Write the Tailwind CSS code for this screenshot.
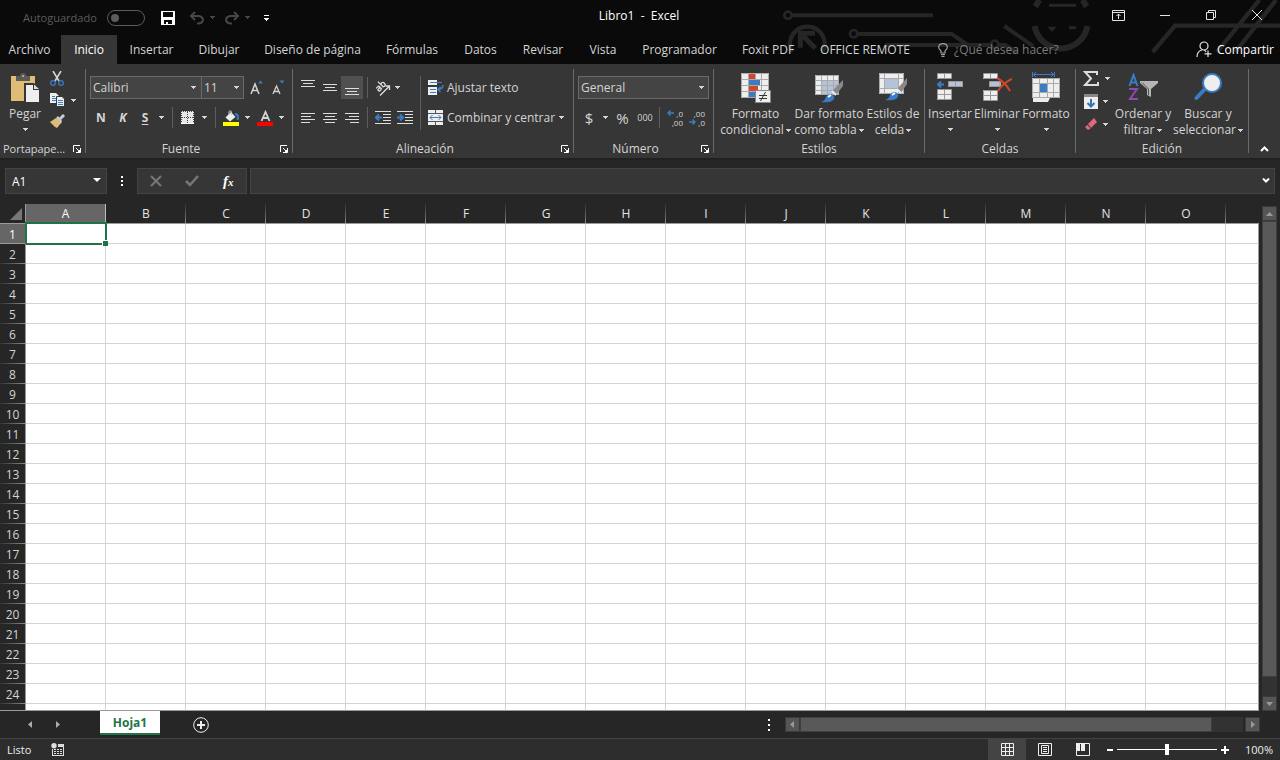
<!DOCTYPE html>
<html lang="es">
<head>
<meta charset="utf-8">
<title>Libro1 - Excel</title>
<script src="https://cdn.jsdelivr.net/npm/@tailwindcss/browser@4"></script>
</head>
<body class="flex h-screen flex-col overflow-hidden bg-[#262626] font-['Open_Sans','Noto_Sans',sans-serif] text-[12px] leading-4 text-[#d4d4d4] select-none">
<svg width="0" height="0" class="absolute" aria-hidden="true">
  <symbol id="caret" viewBox="0 0 5 3"><path d="M0 0h5v1H4v1H3v1H2V2H1V1H0z" fill="currentColor"/></symbol>
  <symbol id="launch" viewBox="0 0 8 8"><path d="M.5 7V.5H7M3 3L7 7" stroke="currentColor" fill="none"/><path d="M7.500 3v4.500H3M6.500 5v1.500H5" stroke="currentColor" fill="none"/></symbol>
</svg>

<!-- Title bar and ribbon tabs -->
<header class="relative shrink-0 bg-[#0a0a0a]">
  <svg class="absolute top-0 right-0 h-[64px] w-[520px]" viewBox="0 0 1560 192" fill="none" stroke="#262626" stroke-width="12" aria-hidden="true">
    <circle cx="84" cy="46" r="11" stroke-width="8"/><path d="M95 46H519"/>
    <circle cx="281" cy="101" r="11" stroke-width="8"/><path d="M292 102H575L625 136"/>
    <path d="M96 156A52 52 0 1 1 188 156" stroke-width="13"/><path d="M121 143V100H165M124 103L166 145" stroke-width="15"/>
    <path d="M375 135H690M733 78L820 139M717 135H735L770 156"/><circle cx="704" cy="133" r="11" stroke-width="8"/>
    <path d="M826 20L838 0M980 20L968 0" stroke-width="18"/><path d="M867 16H948" stroke-width="9"/>
    <path d="M824 78A80 80 0 0 0 982 78" stroke-width="18"/><path d="M862 80H890L876 95z" fill="#262626" stroke="none"/><path d="M927 83H948" stroke-width="9"/>
    <path d="M1178 156L1245 77H1560M1371 156L1498 0M1426 156L1548 0" stroke-width="13"/>
  </svg>
  <div class="relative flex h-[35px] items-center">
    <div class="flex flex-1 items-center">
      <label class="flex w-[146px] items-center gap-[8px] pl-[23px] text-[#5c5c5c]">
        <span class="w-[76px] text-[11px] whitespace-nowrap">Autoguardado</span>
        <span class="relative h-[16px] w-[38px] shrink-0"><input type="checkbox" class="block h-[16px] w-[38px] appearance-none rounded-full border border-[#5c5c5c]"><i class="absolute top-[4px] left-[4px] size-[8px] rounded-full bg-[#5c5c5c]"></i></span>
      </label>
      <button aria-label="Guardar" class="ml-[15px] size-[14px]"><svg viewBox="0 0 14 14" class="size-[14px]"><path d="M0 0H14V14H0zM2 1V6H12V1zM3 9V13H5V11H7V13H11V9z" fill="#fff" fill-rule="evenodd"/></svg></button>
      <button aria-label="Deshacer" class="ml-[14px] flex items-center gap-[5px] text-[#474747]"><svg viewBox="0 0 16 14" class="h-[14px] w-[16px]" fill="none" stroke="currentColor" stroke-width="2"><path d="M6 1L2 5L6 9M2 5H10Q14 6 14 9Q13 13 8 12.500"/></svg><svg class="h-[3px] w-[5px]"><use href="#caret"/></svg></button>
      <button aria-label="Rehacer" class="ml-[9px] flex items-center gap-[5px] text-[#474747]"><svg viewBox="0 0 16 14" class="h-[14px] w-[16px]" fill="none" stroke="currentColor" stroke-width="2"><path d="M10 1L14 5L10 9M14 5H6Q2 6 2 9Q3 13 8 12.500"/></svg><svg class="h-[3px] w-[5px]"><use href="#caret"/></svg></button>
      <button aria-label="Personalizar barra" class="ml-[14px] flex flex-col gap-[2px] text-white"><i class="h-px w-[5px] bg-white"></i><svg class="h-[3px] w-[5px]"><use href="#caret"/></svg></button>
    </div>
    <h1 class="pb-[3px] pl-[16px] whitespace-pre text-white">Libro1  -  Excel</h1>
    <div class="flex flex-1 justify-end pr-[18px] pb-[5px]">
      <button aria-label="Opciones de la cinta" class="mr-[35px]"><svg viewBox="0 0 13 11" class="h-[11px] w-[13px]" fill="none" stroke="#e4e4e4"><path d="M.5.5h12v10H.5zM1 2.500h12M6.500 9V4M4.500 6L6.500 4L8.500 6"/></svg></button>
      <button aria-label="Minimizar" class="mr-[36px]"><svg viewBox="0 0 10 10" class="size-[10px]"><path d="M0 5.500H10" stroke="#e4e4e4"/></svg></button>
      <button aria-label="Restaurar" class="mr-[36px]"><svg viewBox="0 0 10 10" class="size-[10px]" fill="none" stroke="#e4e4e4"><path d="M.5 2.500h7v7h-7zM2.500 2V.5h7v7H8"/></svg></button>
      <button aria-label="Cerrar"><svg viewBox="0 0 10 10" class="size-[10px]"><path d="M0 0L10 10M10 0L0 10" stroke="#e4e4e4"/></svg></button>
    </div>
  </div>
  <nav class="relative flex h-[29px] items-center whitespace-nowrap">
    <button class="w-[61px] pr-[2px]">Archivo</button>
    <button class="h-full w-[56px] bg-[#363636] text-white">Inicio</button>
    <button class="w-[69px]">Insertar</button>
    <button class="w-[66px]">Dibujar</button>
    <button class="w-[121px]">Diseño de página</button>
    <button class="w-[78px]">Fórmulas</button>
    <button class="w-[59px]">Datos</button>
    <button class="w-[66px]">Revisar</button>
    <button class="w-[54px]">Vista</button>
    <button class="w-[99px]">Programador</button>
    <button class="w-[78px]">Foxit PDF</button>
    <button class="w-[116px]">OFFICE REMOTE</button>
    <button class="ml-[15px] flex items-center gap-[6px] text-[#7b7b7b]"><svg viewBox="0 0 10 14" class="h-[14px] w-[10px]" fill="none" stroke="#a0a0a0"><path d="M3 10V8Q.5 6 .7 4Q1 .7 5 .7T9.300 4Q9.500 6 7 8V10zM3 11.500H7M3.500 13.300H6.500" stroke-width="1.200"/></svg>¿Qué desea hacer?</button>
    <button class="mr-[6px] ml-auto flex items-center gap-[5px] text-white"><svg viewBox="0 0 16 17" class="h-[17px] w-[16px]" fill="none" stroke="#e4e4e4" stroke-width="1.200"><circle cx="8" cy="5" r="4"/><path d="M1 16Q1 10 6 9M8 9Q9.500 9.500 10 11M12 9.500V16M8.500 12.800H15.500"/></svg>Compartir</button>
  </nav>
</header>

<!-- Ribbon -->
<main class="flex min-h-0 flex-1 flex-col">
<div class="flex h-[94px] shrink-0 bg-[#363636] whitespace-nowrap">

  <section class="flex w-[85px] shrink-0 flex-col">
    <div class="flex h-[77px]">
      <button class="flex w-[50px] flex-col items-center pt-[9px]">
        <svg viewBox="0 0 29 30" class="h-[30px] w-[29px]"><path d="M0 3H24V28H0z" fill="#e0bd76"/><path d="M5 8V3H9Q9 0 12 0T15 3H19V8z" fill="#5a5a5a"/><circle cx="12" cy="3" r="1" fill="#e0bd76"/><path d="M13 10H23L29 15V30H13z" fill="#363636"/><path d="M15 12H22V17H28V29H15z" fill="#eee"/><path d="M23 11.500L28 16H23z" fill="#ddd"/></svg>
        <span class="mt-[3px]">Pegar</span><svg class="mt-[6px] h-[3px] w-[5px]"><use href="#caret"/></svg>
      </button>
      <div class="flex flex-col gap-[7px] pt-[7px]">
        <button aria-label="Cortar" class="w-[14px]"><svg viewBox="0 0 14 15" class="h-[15px] w-[14px]" fill="none" stroke="#d4d4d4" stroke-width="1.600"><path d="M3 0L9 10M11 0L5 10"/><g stroke="#3a7dc4" stroke-width="1.300"><circle cx="3" cy="12" r="2.300"/><circle cx="11" cy="12" r="2.300"/></g></svg></button>
        <button aria-label="Copiar" class="flex items-center gap-[6px]"><svg viewBox="0 0 15 14" class="h-[14px] w-[15px]"><path d="M0 0H6L9 3V10H0z" fill="#eee"/><path d="M2 3.500H5M2 5.500H6M2 7.500H6" stroke="#3a7dc4"/><path d="M6.500 3.500H12L14.500 6V13.500H6.500z" fill="#eee" stroke="#363636"/><path d="M8 7.500H13M8 9.500H13M8 11.500H13" stroke="#3a7dc4"/></svg><svg class="h-[3px] w-[5px]"><use href="#caret"/></svg></button>
        <button aria-label="Copiar formato" class="w-[16px]"><svg viewBox="0 0 16 14" class="h-[14px] w-[16px]"><path d="M0 8L6 4L11 9L7 14L5 13L3 11z" fill="#e0bd76"/><path d="M6 4L8 2L12 7L11 10z" fill="#ccc"/><path d="M10 5L14 1" stroke="#ccc" stroke-width="3"/></svg></button>
      </div>
    </div>
    <footer class="flex items-center justify-between pr-[4px] pl-[3px]"><span class="text-[11px]">Portapape...</span><button aria-label="Portapapeles"><svg class="block size-[8px] text-white"><use href="#launch"/></svg></button></footer>
  </section>
  <i class="h-[84px] w-px shrink-0 self-center bg-[#6a6a6a]"></i>

  <section class="flex w-[206px] shrink-0 flex-col">
    <div class="flex h-[77px] flex-col gap-[7px] pt-[12px] pl-[4px]">
      <div class="flex h-[23px] items-center">
        <div class="relative h-full"><select aria-label="Fuente" class="h-full w-[112px] appearance-none border border-[#6a6a6a] bg-[#444] pl-[2px]"><option>Calibri</option></select><svg class="pointer-events-none absolute top-[10px] right-[6px] h-[3px] w-[5px]"><use href="#caret"/></svg></div>
        <div class="relative -ml-px h-full"><select aria-label="Tamaño de fuente" class="h-full w-[43px] appearance-none border border-[#6a6a6a] bg-[#444] pl-[2px]"><option>11</option></select><svg class="pointer-events-none absolute top-[10px] right-[5px] h-[3px] w-[5px]"><use href="#caret"/></svg></div>
        <button aria-label="Aumentar tamaño" class="ml-[6px]"><svg viewBox="0 0 14 15" class="h-[15px] w-[14px]"><path d="M1 14L5 4L9 14M2.500 10.500H8" fill="none" stroke="#d4d4d4" stroke-width="1.500"/><path d="M8 3.500L10.500.5L13 3.500z" fill="#3a7dc4"/></svg></button>
        <button aria-label="Reducir tamaño" class="ml-[8px]"><svg viewBox="0 0 14 15" class="h-[15px] w-[14px]"><path d="M1 14L4.500 6L8 14M2.500 11.500H7" fill="none" stroke="#d4d4d4" stroke-width="1.300"/><path d="M7.500.5L10 3.500L12.500.5z" fill="#3a7dc4"/></svg></button>
      </div>
      <div class="flex h-[23px] items-center">
        <button class="w-[22px] font-bold">N</button><button class="w-[22px] font-bold italic">K</button><button class="w-[22px] font-bold underline underline-offset-2">S</button>
        <button aria-label="Subrayado" class="w-[11px] pl-[3px]"><svg class="h-[3px] w-[5px]"><use href="#caret"/></svg></button>
        <i class="ml-[5px] h-[21px] w-px bg-[#5e5e5e]"></i>
        <button aria-label="Bordes" class="ml-[8px] flex items-center gap-[8px]"><svg viewBox="0 0 13 13" class="size-[13px]"><path d="M0 0H13V12H0z" fill="#e8e8e8"/><path d="M0 12.500H13" stroke="#fff"/><path d="M.5 0V12M6.500 1V12M12.500 0V12M0 .5H13M1 6.500H13" stroke="#444" stroke-dasharray="1 1"/></svg><svg class="h-[3px] w-[5px]"><use href="#caret"/></svg></button>
        <i class="ml-[8px] h-[21px] w-px bg-[#5e5e5e]"></i>
        <button aria-label="Color de relleno" class="ml-[7px] flex items-center gap-[6px]"><svg viewBox="0 0 16 16" class="size-[16px]"><path d="M0 12H16V16H0z" fill="#ff0"/><path d="M2.500 7.500L8 2L12.500 7L7 11.500z" fill="#eee"/><path d="M6 5V1.500Q7 0 8.500 1.500V5" fill="none" stroke="#ccc"/><path d="M12 4Q16 4 14.500 10" fill="none" stroke="#3a7dc4" stroke-width="2"/></svg><svg class="h-[3px] w-[5px]"><use href="#caret"/></svg></button>
        <button aria-label="Color de fuente" class="ml-[7px] flex items-center gap-[6px]"><svg viewBox="0 0 16 16" class="size-[16px]"><path d="M4.500 11L8.500 2L12.500 11M5.500 8H11.500" fill="none" stroke="#d4d4d4" stroke-width="1.800"/><path d="M0 12H16V16H0z" fill="#f00"/></svg><svg class="h-[3px] w-[5px]"><use href="#caret"/></svg></button>
      </div>
    </div>
    <footer class="flex items-center pr-[4px]"><span class="flex-1 pr-[4px] text-center">Fuente</span><button aria-label="Más de fuente"><svg class="block size-[8px] text-white"><use href="#launch"/></svg></button></footer>
  </section>
  <i class="h-[84px] w-px shrink-0 self-center bg-[#6a6a6a]"></i>

  <section class="flex w-[280px] shrink-0 flex-col">
    <div class="flex h-[77px] pt-[12px] pl-[4px]">
      <div class="flex flex-col gap-[7px]">
        <div class="flex h-[23px] items-center">
          <button aria-label="Alinear arriba" class="flex h-full w-[22px] items-center justify-center pb-[8px]"><svg viewBox="0 0 14 7" class="h-[7px] w-[14px]"><path d="M0 .5H14M2 3.500H12M0 6.500H14" stroke="#ddd"/></svg></button>
          <button aria-label="Alinear en medio" class="flex h-full w-[22px] items-center justify-center"><svg viewBox="0 0 14 7" class="h-[7px] w-[14px]"><path d="M0 .5H14M2 3.500H12M0 6.500H14" stroke="#ddd"/></svg></button>
          <button aria-label="Alinear abajo" class="flex h-full w-[22px] items-center justify-center bg-[#505050] pt-[8px]"><svg viewBox="0 0 14 7" class="h-[7px] w-[14px]"><path d="M0 .5H14M2 3.500H12M0 6.500H14" stroke="#ddd"/></svg></button>
          <i class="ml-[4px] h-[21px] w-px bg-[#5e5e5e]"></i>
          <button aria-label="Orientación" class="ml-[7px] flex items-center gap-[3px]"><svg viewBox="0 0 17 16" class="h-[16px] w-[17px] overflow-visible" fill="none" stroke="#ddd" stroke-width="1.300"><g transform="rotate(-45 5 8)"><path d="M2 5.500H4.500Q5.500 5.500 5.500 7V10M5.500 7.500H3.500Q2 7.500 2 8.700T3.500 10T5.500 9M8 2V10M8 6.500Q9 5.300 10 5.500Q11.500 5.700 11.500 7.700T10 10Q9 10.200 8 9"/></g><path d="M5 15.500L14 6.500M10.500 6H14.500V10"/></svg><svg class="h-[3px] w-[5px]"><use href="#caret"/></svg></button>
        </div>
        <div class="flex h-[23px] items-center">
          <button aria-label="Alinear a la izquierda" class="flex w-[22px] justify-center"><svg viewBox="0 0 14 10" class="h-[10px] w-[14px]"><path d="M0 .5H14M0 3.500H10M0 6.500H14M0 9.500H9" stroke="#ddd"/></svg></button>
          <button aria-label="Centrar" class="flex w-[22px] justify-center"><svg viewBox="0 0 14 10" class="h-[10px] w-[14px]"><path d="M0 .5H14M2 3.500H12M0 6.500H14M2 9.500H12" stroke="#ddd"/></svg></button>
          <button aria-label="Alinear a la derecha" class="flex w-[22px] justify-center"><svg viewBox="0 0 14 10" class="h-[10px] w-[14px]"><path d="M0 .5H14M4 3.500H14M0 6.500H14M5 9.500H14" stroke="#ddd"/></svg></button>
          <i class="ml-[4px] h-[21px] w-px bg-[#5e5e5e]"></i>
          <button aria-label="Disminuir sangría" class="ml-[7px]"><svg viewBox="0 0 16 13" class="h-[13px] w-[16px]"><path d="M0 .5H16M8 3.500H16M8 6.500H16M8 9.500H16M0 12.500H16" stroke="#ddd"/><path d="M7 6.500H1M4 3.500L1 6.500L4 9.500" stroke="#3a7dc4" stroke-width="2" fill="none"/></svg></button>
          <button aria-label="Aumentar sangría" class="ml-[6px]"><svg viewBox="0 0 16 13" class="h-[13px] w-[16px]"><path d="M0 .5H16M8 3.500H16M8 6.500H16M8 9.500H16M0 12.500H16" stroke="#ddd"/><path d="M0 6.500H6M3 3.500L6 6.500L3 9.500" stroke="#3a7dc4" stroke-width="2" fill="none"/></svg></button>
        </div>
      </div>
      <i class="ml-[7px] h-[54px] w-px bg-[#5e5e5e]"></i>
      <div class="ml-[7px] flex flex-col gap-[7px]">
        <button class="flex h-[23px] items-center gap-[3px]"><svg viewBox="0 0 16 15" class="h-[15px] w-[16px]"><path d="M0 0H9V5H0zM0 7H9V15H0z" fill="#eee"/><path d="M2 2.500H14M2 9.500H8M2 12.500H8" stroke="#3a7dc4"/><path d="M15 5Q15 9 10 9.500M12.500 7L10 9.500L12.500 12" stroke="#3a7dc4" stroke-width="1.500" fill="none"/></svg>Ajustar texto</button>
        <button class="flex h-[23px] items-center gap-[4px]"><svg viewBox="0 0 15 15" class="size-[15px]"><path d="M0 0H15V15H0z" fill="#eee"/><path d="M0 3.500H15M0 11.500H15M7.500 0V3M7.500 12V15" stroke="#555"/><path d="M2 7.500H13M4.500 5L2 7.500L4.500 10M10.500 5L13 7.500L10.500 10" stroke="#3a7dc4" fill="none"/></svg><span class="w-[108px] text-left">Combinar y centrar</span><svg class="h-[3px] w-[5px]"><use href="#caret"/></svg></button>
      </div>
    </div>
    <footer class="flex items-center pr-[4px]"><span class="flex-1 pr-[4px] text-center">Alineación</span><button aria-label="Más de alineación"><svg class="block size-[8px] text-white"><use href="#launch"/></svg></button></footer>
  </section>
  <i class="h-[84px] w-px shrink-0 self-center bg-[#6a6a6a]"></i>

  <section class="flex w-[139px] shrink-0 flex-col">
    <div class="flex h-[77px] flex-col gap-[7px] pt-[12px] pl-[4px]">
      <div class="relative h-[23px] w-[131px]"><select aria-label="Formato de número" class="h-full w-full appearance-none border border-[#6a6a6a] bg-[#444] pl-[2px]"><option>General</option></select><svg class="pointer-events-none absolute top-[10px] right-[5px] h-[3px] w-[5px]"><use href="#caret"/></svg></div>
      <div class="flex h-[23px] items-center">
        <button class="w-[22px] text-[15px]">$</button><button aria-label="Monedas" class="flex w-[11px] justify-center"><svg class="h-[3px] w-[5px]"><use href="#caret"/></svg></button><button class="w-[23px] text-[15px]">%</button><button class="w-[22px] text-[9px]">000</button>
        <i class="ml-[3px] h-[21px] w-px bg-[#5e5e5e]"></i>
        <button aria-label="Aumentar decimales" class="ml-[7px] flex w-[16px] flex-col text-[8px] leading-[9px]"><span class="flex items-center justify-between"><svg viewBox="0 0 7 6" class="h-[6px] w-[7px]"><path d="M7 3H1M3.500.5L1 3L3.500 5.500" stroke="#3a7dc4" stroke-width="1.500" fill="none"/></svg>,0</span><span class="text-right">,00</span></button>
        <button aria-label="Disminuir decimales" class="ml-[6px] flex w-[16px] flex-col text-[8px] leading-[9px]"><span class="text-right">,00</span><span class="flex items-center justify-between"><svg viewBox="0 0 7 6" class="h-[6px] w-[7px]"><path d="M0 3H6M3.500.5L6 3L3.500 5.500" stroke="#3a7dc4" stroke-width="1.500" fill="none"/></svg>,0</span></button>
      </div>
    </div>
    <footer class="flex items-center pr-[4px]"><span class="flex-1 pr-[4px] text-center">Número</span><button aria-label="Más de número"><svg class="block size-[8px] text-white"><use href="#launch"/></svg></button></footer>
  </section>
  <i class="h-[84px] w-px shrink-0 self-center bg-[#6a6a6a]"></i>

  <section class="flex w-[210px] shrink-0 flex-col">
    <div class="flex h-[77px] pt-[9px] pl-[4px]">
      <button class="flex w-[75px] flex-col items-center"><svg viewBox="0 0 30 32" class="mb-[1px] h-[32px] w-[30px]"><path d="M0 0H28V25H0z" fill="#eee"/><path d="M8 1H14V6H8z" fill="#d24726"/><path d="M8 7H19V12H8z" fill="#3a7dc4"/><path d="M8 13H17V18H8z" fill="#d24726"/><path d="M8 19H14V24H8z" fill="#3a7dc4"/><path d="M.5.5H27.500V24.500H.5zM0 6.500H28M0 12.500H28M0 18.500H28M7.500 0V25M14.500 0V6M20.500 0V25" fill="none" stroke="#aaa"/><path d="M14.500 17.500H29.500V29.500H14.500z" fill="#eee" stroke="#888"/><path d="M18 22.500H26M18 25.500H26M24.500 19L19.500 28" stroke="#333"/></svg><span>Formato</span><span class="flex items-center gap-[2px]">condicional<svg class="h-[3px] w-[5px]"><use href="#caret"/></svg></span></button>
      <button class="flex w-[72px] flex-col items-center"><svg viewBox="0 0 30 32" class="mb-[1px] h-[32px] w-[30px]"><path d="M1 2H25V22H1z" fill="#eee"/><path d="M7 7H25V22H7z" fill="#b4c3d8"/><path d="M1.500 2.500H24.500V21.500H1.500zM1 7.500H25M1 12.500H25M1 17.500H25M7.500 2V22M13.500 2V22M19.500 2V22" fill="none" stroke="#aaa"/><path d="M29 7V13L22 22L18 18z" fill="#888"/><path d="M18 18L22 22" stroke="#eee" stroke-width="2"/><path d="M7 29Q11 28 12 24Q15 19 19 22Q22 25 18 28Q14 30 7 29z" fill="#3a7dc4"/><path d="M14 24L17 22" stroke="#fff" stroke-width="2"/></svg><span>Dar formato</span><span class="flex items-center gap-[2px]">como tabla<svg class="h-[3px] w-[5px]"><use href="#caret"/></svg></span></button>
      <button class="flex w-[56px] flex-col items-center"><svg viewBox="0 0 30 32" class="mb-[1px] h-[32px] w-[30px]"><path d="M1 0H26V21H1z" fill="#eee"/><path d="M6 5H20V15H6z" fill="#b4c3d8"/><path d="M1.500.5H25.500V20.500H1.500zM1 5.500H25M1 15.500H25M6.500 0V20M20.500 0V20" fill="none" stroke="#aaa"/><path d="M29 5V11L23 20L19 16z" fill="#888"/><path d="M19 16L23 20" stroke="#eee" stroke-width="2"/><path d="M7 27Q11 26 12 22Q15 17 19 20Q22 23 18 26Q14 28 7 27z" fill="#3a7dc4"/><path d="M14 22L17 20" stroke="#fff" stroke-width="2"/></svg><span>Estilos de</span><span class="flex items-center gap-[2px]">celda<svg class="h-[3px] w-[5px]"><use href="#caret"/></svg></span></button>
    </div>
    <footer class="text-center">Estilos</footer>
  </section>
  <i class="h-[84px] w-px shrink-0 self-center bg-[#6a6a6a]"></i>

  <section class="flex w-[150px] shrink-0 flex-col">
    <div class="flex h-[77px] pt-[9px] pl-[1px]">
      <button class="flex w-[48px] flex-col items-center"><svg viewBox="0 0 28 32" class="mb-[1px] h-[32px] w-[28px]"><path d="M1 1H15V6H1zM1 17H15V27H1z" fill="#eee"/><path d="M12 9H27V14H12z" fill="#b4c3d8"/><path d="M1.500.5H15.500V5.500H1.500zM1.500 16.500H15.500V26.500H1.500zM1 21.500H15M8.500 1V6M8.500 17V27M12.500 8.500H26.500V13.500H12.500zM19.500 9V14" fill="none" stroke="#999"/><path d="M8 11.500H2M5 8.500L2 11.500L5 14.500" stroke="#3a7dc4" stroke-width="2" fill="none"/></svg><span>Insertar</span><svg class="mt-[6px] h-[3px] w-[5px]"><use href="#caret"/></svg></button>
      <button class="flex w-[46px] flex-col items-center"><svg viewBox="0 0 30 32" class="mb-[1px] h-[32px] w-[30px]"><path d="M1 1H15V6H1zM1 17H15V27H1z" fill="#eee"/><path d="M7 9H19V14H7z" fill="#b4c3d8"/><path d="M1.500.5H15.500V5.500H1.500zM1.500 17.500H15.500V27.500H1.500zM1 22.500H15M8.500 1V6M8.500 17V27M7.500 8.500H18V13.500H7.500z" fill="none" stroke="#999"/><path d="M15 5Q23 9 28 18M30 6Q21 10 16 18" stroke="#d24726" stroke-width="2" fill="none"/></svg><span>Eliminar</span><svg class="mt-[6px] h-[3px] w-[5px]"><use href="#caret"/></svg></button>
      <button class="flex w-[52px] flex-col items-center"><svg viewBox="0 0 28 32" class="-mt-px mb-[2px] h-[32px] w-[28px]"><path d="M.5 0V5M22.500 0V5M1 2.500H22M4 0L1.500 2.500L4 5M19 0L21.500 2.500L19 5" stroke="#3a7dc4" fill="none"/><path d="M0 6H28V26H18L16 30H1V26H0z" fill="#eee"/><path d="M.5 6.500H27.500V25.500H.5zM0 11.500H28M0 20.500H28M7.500 6V26M15.500 6V26M21.500 6V26" stroke="#aaa" fill="none"/><path d="M8 12H15V20H8z" fill="#3a7dc4"/></svg><span>Formato</span><svg class="mt-[6px] h-[3px] w-[5px]"><use href="#caret"/></svg></button>
    </div>
    <footer class="text-center">Celdas</footer>
  </section>
  <i class="h-[84px] w-px shrink-0 self-center bg-[#6a6a6a]"></i>

  <section class="flex w-[172px] shrink-0 flex-col">
    <div class="flex h-[77px]">
      <div class="flex flex-col gap-[8px] pt-[7px] pl-[7px]">
        <button aria-label="Suma" class="flex items-center gap-[6px]"><svg viewBox="0 0 16 15" class="h-[15px] w-[16px]"><path d="M14 4V1H2L8 7.500L2 14H15V11" fill="none" stroke="#ddd" stroke-width="2"/></svg><svg class="h-[3px] w-[5px]"><use href="#caret"/></svg></button>
        <button aria-label="Rellenar" class="flex items-center gap-[5px] pl-[1px]"><svg viewBox="0 0 14 15" class="h-[15px] w-[14px]"><path d="M0 0H14V15H0z" fill="#eee"/><path d="M0 0H14V3H0z" fill="#888"/><path d="M7 5V13M3.500 9L7 12.500L10.500 9" stroke="#2e75b6" stroke-width="2" fill="none"/></svg><svg class="h-[3px] w-[5px]"><use href="#caret"/></svg></button>
        <button aria-label="Borrar" class="flex items-center gap-[5px] pl-[1px]"><svg viewBox="0 0 14 14" class="size-[14px]"><path d="M4 7L10 1L13 5L7 11z" fill="#e06a7c"/><path d="M3.500 8L6.500 11.500L4 13L1 10z" fill="#e06a7c"/></svg><svg class="h-[3px] w-[5px]"><use href="#caret"/></svg></button>
      </div>
      <button class="ml-[4px] flex w-[58px] flex-col items-center pt-[9px]"><svg viewBox="0 0 30 32" class="mb-[1px] h-[32px] w-[30px]"><path d="M1.500 13L5.500 2L9.500 13M3 9.500H8" stroke="#3a7dc4" stroke-width="2" fill="none"/><path d="M1 16H9L2 26H10" stroke="#8e4bae" stroke-width="2" fill="none"/><path d="M12 8H30V10L23 16V24L19 22V16L12 10z" fill="#b5b5b5"/><path d="M14 9.500L20.500 16V22" stroke="#555" fill="none"/></svg><span>Ordenar y</span><span class="flex items-center gap-[3px]">filtrar<svg class="h-[3px] w-[5px]"><use href="#caret"/></svg></span></button>
      <button class="flex w-[72px] flex-col items-center pt-[9px]"><svg viewBox="0 0 28 32" class="mb-[1px] h-[32px] w-[28px]"><path d="M2.500 25L10 17" stroke="#3a7dc4" stroke-width="4" stroke-linecap="round"/><circle cx="18" cy="10" r="9" fill="#eee" stroke="#3a7dc4" stroke-width="2"/></svg><span>Buscar y</span><span class="flex items-center gap-[2px]">seleccionar<svg class="h-[3px] w-[5px]"><use href="#caret"/></svg></span></button>
    </div>
    <footer class="text-center">Edición</footer>
  </section>
  <i class="h-[84px] w-px shrink-0 self-center bg-[#6a6a6a]"></i>
  <div class="flex flex-1 items-end justify-center pb-[6px]"><button aria-label="Contraer la cinta"><svg viewBox="0 0 9 6" class="h-[6px] w-[9px]"><path d="M1 5L4.500 1.500L8 5" stroke="#fff" stroke-width="2" fill="none"/></svg></button></div>
</div>

<!-- Formula bar -->
<div class="flex h-[46px] shrink-0 items-start border-t-2 border-[#212121] px-[5px] pt-[8px]">
  <div class="relative h-[26px] w-[102px]"><input aria-label="Cuadro de nombres" value="A1" class="h-full w-full border border-[#444] bg-[#363636] px-[6px] text-white"><svg class="pointer-events-none absolute top-[10px] right-[6px] h-[4px] w-[8px]" viewBox="0 0 8 4"><path d="M0 0H8L4 4z" fill="#fff"/></svg></div>
  <div class="flex h-[26px] w-[30px] flex-col items-center justify-center gap-[2px]"><i class="size-[2px] bg-white"></i><i class="size-[2px] bg-white"></i><i class="size-[2px] bg-white"></i></div>
  <div class="flex h-[26px] w-[110px] items-center border border-[#444] bg-[#363636]">
    <button aria-label="Cancelar" class="ml-[12px]"><svg viewBox="0 0 12 12" class="size-[12px]"><path d="M1 1L11 11M11 1L1 11" stroke="#777" stroke-width="2"/></svg></button>
    <button aria-label="Introducir" class="ml-[23px]"><svg viewBox="0 0 14 12" class="h-[12px] w-[14px]"><path d="M1 6L5 10L13 1" stroke="#777" stroke-width="2.500" fill="none"/></svg></button>
    <button class="ml-[24px] font-['Liberation_Serif',serif] text-[15px] font-bold text-white italic">f<span class="text-[11px]">x</span></button>
  </div>
  <div class="relative ml-[3px] h-[26px] flex-1"><input aria-label="Barra de fórmulas" class="h-full w-full border border-[#444] bg-[#363636] px-[6px] text-white"><svg class="pointer-events-none absolute top-[10px] right-[5px] h-[5px] w-[8px]" viewBox="0 0 8 5"><path d="M1 .5L4 3.500L7 .5" stroke="#fff" stroke-width="2" fill="none"/></svg></div>
</div>

<!-- Sheet -->
<div class="flex min-h-0 flex-1">
  <div class="min-w-0 flex-1 overflow-hidden border-b border-[#9a9a9a]">
    <table class="w-full table-fixed border-separate border-spacing-0 bg-white">
      <thead><tr id="cols" class="h-[20px] bg-[#262626] text-[#e4e4e4]"></tr></thead>
      <tbody id="rows"></tbody>
    </table>
  </div>
  <div class="flex w-[21px] flex-col items-center pt-[2px] pr-px">
    <button aria-label="Subir" class="flex h-[15px] w-[15px] items-center justify-center border border-[#3a3a3a] bg-[#555]"><svg viewBox="0 0 7 4" class="h-[4px] w-[7px]"><path d="M0 4H7L3.500 0z" fill="#999"/></svg></button>
    <div class="w-[15px] flex-1 bg-[#323232]"><div class="h-[96%] border border-[#3f3f3f] bg-[#595959]"></div></div>
    <button aria-label="Bajar" class="flex h-[15px] w-[15px] items-center justify-center border border-[#3a3a3a] bg-[#555]"><svg viewBox="0 0 7 4" class="h-[4px] w-[7px]"><path d="M0 0H7L3.500 4z" fill="#999"/></svg></button>
  </div>
</div>

<!-- Sheet tabs -->
<div class="flex h-[27px] shrink-0 items-center pr-[20px]">
  <button aria-label="Hoja anterior" class="ml-[28px]"><svg viewBox="0 0 4 7" class="h-[7px] w-[4px]"><path d="M4 0V7L0 3.500z" fill="#aaa"/></svg></button>
  <button aria-label="Hoja siguiente" class="ml-[24px]"><svg viewBox="0 0 4 7" class="h-[7px] w-[4px]"><path d="M0 0V7L4 3.500z" fill="#aaa"/></svg></button>
  <button class="ml-[40px] h-[24px] w-[60px] self-start border-b-2 border-[#217346] bg-white pt-[2px] font-bold text-[#217346]">Hoja1</button>
  <button aria-label="Hoja nueva" class="ml-[33px]"><svg viewBox="0 0 16 16" class="size-[16px]" fill="none" stroke="#eee"><circle cx="8" cy="8" r="7.300"/><path d="M8 4V12M4 8H12" stroke-width="2"/></svg></button>
  <div class="ml-auto flex flex-col gap-[3px]"><i class="size-[2px] bg-white"></i><i class="size-[2px] bg-white"></i><i class="size-[2px] bg-white"></i></div>
  <div class="ml-[15px] flex h-[15px] w-[37.7%] shrink-0">
    <button aria-label="Desplazar a la izquierda" class="flex w-[15px] items-center justify-center border border-[#3a3a3a] bg-[#555]"><svg viewBox="0 0 4 7" class="h-[7px] w-[4px]"><path d="M4 0V7L0 3.500z" fill="#999"/></svg></button>
    <div class="mr-[2px] flex-1 bg-[#323232]"><div class="h-full w-[93%] border border-[#3f3f3f] bg-[#595959]"></div></div>
    <button aria-label="Desplazar a la derecha" class="flex w-[15px] items-center justify-center border border-[#3a3a3a] bg-[#555]"><svg viewBox="0 0 4 7" class="h-[7px] w-[4px]"><path d="M0 0V7L4 3.500z" fill="#999"/></svg></button>
  </div>
</div>
</main>

<!-- Status bar -->
<footer class="flex h-[22px] shrink-0 items-center border-t border-[#444] bg-[#2d2d2d] px-[7px] text-[11px] text-[#eee]">
  <span class="w-[44px]">Listo</span>
  <button aria-label="Grabar macro"><svg viewBox="0 0 13 13" class="size-[13px]"><path d="M1 6V13H13V1H7V3H12V12H2V6z" fill="#ddd"/><path d="M7 1H13V4H7z" fill="#ddd"/><path d="M3 6.500H11M3 8.500H11M3 10.500H11" stroke="#ddd" stroke-dasharray="2 1"/><circle cx="3" cy="2.700" r="2.700" fill="#ddd"/></svg></button>
  <button aria-label="Normal" class="ml-auto flex h-full w-[38px] items-center justify-center bg-[#444]"><svg viewBox="0 0 13 13" class="size-[13px]" fill="none" stroke="#eee"><path d="M.5.5H12.500V12.500H.5zM.5 4.500H12.500M.5 8.500H12.500M4.500.5V12.500M8.500.5V12.500"/></svg></button>
  <button aria-label="Diseño de página" class="flex h-full w-[38px] items-center justify-center"><svg viewBox="0 0 14 13" class="h-[13px] w-[14px]" fill="none" stroke="#eee"><path d="M.5.5H13.500V12.500H.5zM3.500 2.500H10.500V10.500H3.500zM5 4.500H9M5 6.500H9M5 8.500H9"/></svg></button>
  <button aria-label="Vista previa de salto de página" class="flex h-full w-[38px] items-center justify-center"><svg viewBox="0 0 14 13" class="h-[13px] w-[14px]"><path d="M.5.5H13.500V12.500H.5z" fill="none" stroke="#eee"/><path d="M0 0H4V8H0zM5 0H9V8H5z" fill="#eee"/></svg></button>
  <button aria-label="Alejar" class="ml-[5px] flex h-[8px] w-[6px] items-center"><i class="block h-[2px] w-full bg-white"></i></button>
  <input type="range" aria-label="Zoom" class="mx-[4px] h-[11px] w-[100px] appearance-none bg-[linear-gradient(#fff,#fff)] bg-[length:100%_1px] bg-center bg-no-repeat [&::-webkit-slider-thumb]:h-[11px] [&::-webkit-slider-thumb]:w-[4px] [&::-webkit-slider-thumb]:appearance-none [&::-webkit-slider-thumb]:bg-white">
  <button aria-label="Acercar"><svg viewBox="0 0 8 8" class="size-[8px]"><path d="M4 0V8M0 4H8" stroke="#fff" stroke-width="2"/></svg></button>
  <span class="ml-[8px] w-[36px] text-right whitespace-nowrap">100%</span>
</footer>

<script>
  const letters = 'ABCDEFGHIJKLMNO'.split('');
  const tick = '<i class="absolute right-0 top-0 h-full w-px bg-linear-to-b from-[#333] to-[#888]"></i>';
  document.getElementById('cols').innerHTML =
    '<th class="relative w-[26px] border-r border-b border-[#9a9a9a]"><svg viewBox="0 0 12 12" class="absolute right-[3px] bottom-[3px] size-[12px]"><path d="M12 0V12H0z" fill="#777"/></svg></th>' +
    letters.map((l, i) => i === 0
      ? '<th class="w-[80px] border-r border-b border-r-[#bbb] border-b-[#9a9a9a] bg-[#666] p-0 font-normal text-white">A</th>'
      : '<th class="relative w-[80px] border-b border-[#9a9a9a] p-0 font-normal">' + l + tick + '</th>').join('') +
    '<th class="border-b border-[#9a9a9a]"></th>';
  const cell = '<td class="border-r border-b border-[#d4d4d4] p-0"></td>';
  const lastCell = '<td class="border-r border-b border-r-[#9a9a9a] border-b-[#d4d4d4] p-0"></td>';
  const active = '<td class="relative border-r border-b border-[#d4d4d4] p-0"><i class="absolute -inset-px -top-[2px] -right-[2px] -bottom-[2px] border-2 border-[#217346]"></i><i class="absolute -right-[3px] -bottom-[3px] z-10 box-content size-[5px] border-t border-l border-white bg-[#217346]"></i></td>';

  // Numbered rows, then blank ones that fill whatever height is left.
  const numbered = 24, total = 60;
  let html = '';
  for (let r = 1; r <= total; r++) {
    html += '<tr class="h-[20px]">' + (r === 1
      ? '<th scope="row" class="border-r border-b border-[#9a9a9a] bg-[#666] px-0 pt-[2px] pb-0 font-normal text-white">1</th>' + active
      : '<th scope="row" class="relative border-r border-[#9a9a9a] bg-[#262626] px-0 pt-px pb-0 font-normal">' + (r > numbered ? '' : r) + '<i class="absolute bottom-0 left-0 h-px w-full bg-linear-to-r from-[#333] to-[#888]"></i></th>' + cell) +
      cell.repeat(14) + lastCell + '</tr>';
  }
  document.getElementById('rows').innerHTML = html;
</script>
</body>
</html>
